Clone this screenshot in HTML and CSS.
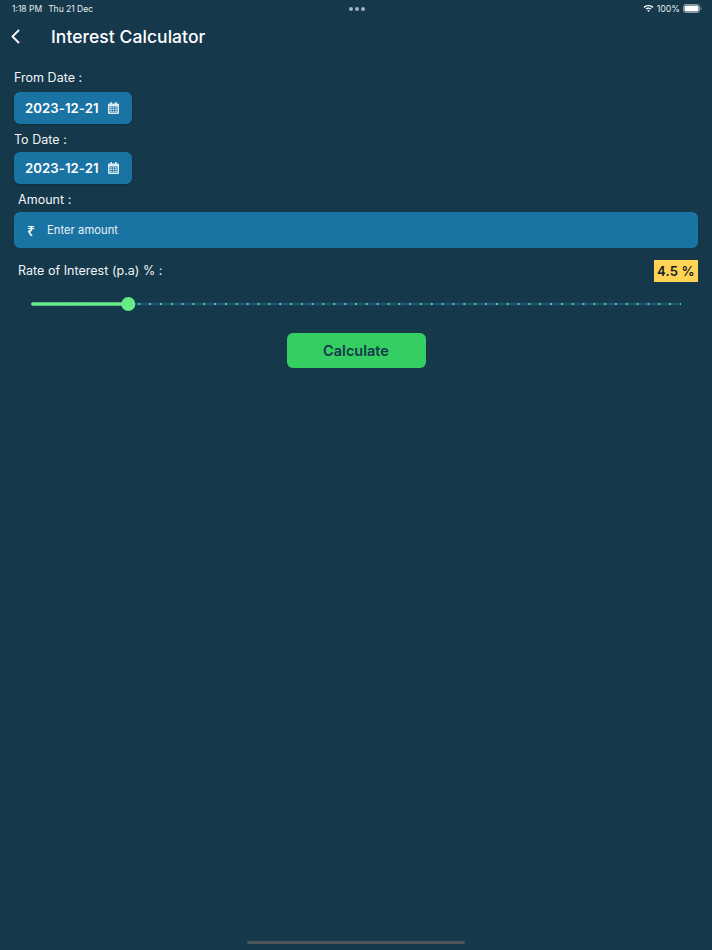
FILE: index.html
```html
<!DOCTYPE html>
<html lang="en">
<head>
<meta charset="utf-8">
<title>Interest Calculator</title>
<link rel="stylesheet" href="styles.css">
</head>
<body>
<div class="page">
  <div class="status">
    <div class="status-left"><span>1:18 PM</span><span>Thu 21 Dec</span></div>
    <div class="status-dots"><i></i><i></i><i></i></div>
    <div class="status-right">
      <svg class="wifi" width="11" height="9" viewBox="0 0 11 9"><path d="M5.5 1C3.6 1 1.9 1.700 .6 2.900l.9 1C2.600 2.900 4 2.300 5.500 2.300s2.900.6 4 1.600l.9-1C9.100 1.700 7.400 1 5.500 1z" fill="#fff"/><path d="M5.500 3.500c-1.100 0-2.100.4-2.900 1.100l.9 1c.5-.5 1.200-.8 2-.8s1.500.3 2 .8l.9-1c-.8-.7-1.800-1.100-2.900-1.100z" fill="#fff"/><path d="M5.500 5.900c-.5 0-1 .2-1.300.5l1.300 1.500 1.300-1.500c-.3-.3-.8-.5-1.300-.5z" fill="#fff"/></svg>
      <span>100%</span>
      <svg class="battery" width="19" height="9" viewBox="0 0 19 9"><rect x=".5" y=".5" width="16" height="8" rx="2" fill="none" stroke="#8b9aa5"/><rect x="1.500" y="1.500" width="14" height="6" rx="1" fill="#fff"/><path d="M17.500 3v3c.6-.2 1-.8 1-1.500s-.4-1.300-1-1.500z" fill="#8b9aa5"/></svg>
    </div>
  </div>
  <header class="appbar">
    <svg class="back" width="10" height="15" viewBox="0 0 10 15"><path d="M8 1 1.500 7.500 8 14" fill="none" stroke="#fff" stroke-width="1.800"/></svg>
    <h1>Interest Calculator</h1>
  </header>
  <main class="form">
    <label class="label">From Date :</label>
    <div class="date">
      <span>2023-12-21</span>
      <svg class="cal" width="11" height="12" viewBox="0 0 11 12"><path d="M1 1.500h1.500V0h1.500v1.500h3V0h1.500v1.500H10a1 1 0 0 1 1 1V11a1 1 0 0 1-1 1H1a1 1 0 0 1-1-1V2.500a1 1 0 0 1 1-1z" fill="#dcebf3"/><path d="M1.500 4.500h8v6h-8z" fill="#1a74a3"/><path d="M2.200 5.300h1.600v1.200H2.200zM4.700 5.300h1.600v1.200H4.700zM7.200 5.300h1.600v1.200H7.200zM2.200 7.100h1.600v1.200H2.200zM4.700 7.100h1.600v1.200H4.700zM7.200 7.100h1.600v1.200H7.200zM2.200 8.900h1.600v1.100H2.200zM4.700 8.900h1.600v1.100H4.700zM7.200 8.900h1.600v1.100H7.200z" fill="#dcebf3"/></svg>
    </div>
    <label class="label label-to">To Date :</label>
    <div class="date date-to">
      <span>2023-12-21</span>
      <svg class="cal" width="11" height="12" viewBox="0 0 11 12"><path d="M1 1.500h1.500V0h1.500v1.500h3V0h1.500v1.500H10a1 1 0 0 1 1 1V11a1 1 0 0 1-1 1H1a1 1 0 0 1-1-1V2.500a1 1 0 0 1 1-1z" fill="#dcebf3"/><path d="M1.500 4.500h8v6h-8z" fill="#1a74a3"/><path d="M2.200 5.300h1.600v1.200H2.200zM4.700 5.300h1.600v1.200H4.700zM7.200 5.300h1.600v1.200H7.200zM2.200 7.100h1.600v1.200H2.200zM4.700 7.100h1.600v1.200H4.700zM7.200 7.100h1.600v1.200H7.200zM2.200 8.900h1.600v1.100H2.200zM4.700 8.900h1.600v1.100H4.700zM7.200 8.900h1.600v1.100H7.200z" fill="#dcebf3"/></svg>
    </div>
    <label class="label label-amount">Amount :</label>
    <div class="amount">
      <span class="rupee">₹</span>
      <span class="placeholder">Enter amount</span>
    </div>
    <div class="rate-row">
      <span class="label rate-label">Rate of Interest (p.a) % :</span>
      <span class="badge">4.5 %</span>
    </div>
    <svg class="slider" width="650" height="14" viewBox="0 0 650 14">
      <line x1="1.250" y1="7" x2="648.750" y2="7" stroke="#1d5478" stroke-width="2.500" stroke-linecap="round"/>
      <line x1="9.830" y1="7" x2="650" y2="7" stroke="#45d486" stroke-width="2" stroke-dasharray="2 8.833"/>
      <line x1="1.750" y1="7" x2="97" y2="7" stroke="#65ec85" stroke-width="3.500" stroke-linecap="round"/>
      <line x1="9.830" y1="7" x2="92" y2="7" stroke="#8cd4a4" stroke-width="2" stroke-dasharray="2 8.833"/>
      <circle cx="97.300" cy="7" r="7" fill="#65ec85"/>
    </svg>
    <button class="calc">Calculate</button>
  </main>
  <div class="home"></div>
</div>
</body>
</html>
```
FILE: styles.css
```css
* { box-sizing: border-box; }
html, body { margin: 0; padding: 0; }
body { background: #15384b; font-family: Inter, "Noto Sans", sans-serif; color: #fff; }
.page { height: 950px; display: flex; flex-direction: column; overflow: hidden; }

.status { height: 17px; padding: 0 10px 0 12px; display: flex; align-items: center; justify-content: space-between; font-size: 8.500px; color: #e8edf0; }
.status-left { display: flex; gap: 6px; width: 120px; }
.status-dots { display: flex; gap: 2px; }
.status-dots i { width: 4px; height: 4px; border-radius: 50%; background: #9fb2bf; }
.status-right { display: flex; align-items: center; gap: 3px; width: 120px; justify-content: flex-end; font-size: 8.800px; }
.wifi, .battery { display: block; }
.wifi { margin-right: 0; }

.appbar { height: 38px; display: flex; align-items: center; padding-left: 11px; }
.back { display: block; }
.appbar h1 { margin: 0 0 0 30px; font-size: 17.500px; font-weight: 500; letter-spacing: .05px; color: #fff; }

.form { display: flex; flex-direction: column; padding: 0 14px; flex: 1; }
.label { display: block; font-size: 12.500px; line-height: 18px; letter-spacing: .03px; color: #f2f5f7; }
.form > .label:first-child { margin-top: 14px; }
.label-to { margin-top: 7px; }
.label-amount { margin-top: 7px; margin-left: 4px; }

.date { width: 117.500px; height: 32px; margin-top: 5px; padding: 0 12.500px 0 11px; background: #1a74a3; border-radius: 6px; display: flex; align-items: center; justify-content: space-between; font-size: 13.200px; font-weight: 600; letter-spacing: .05px; box-shadow: 0 1px 2px rgba(0,0,0,.15); }
.date-to { margin-top: 3px; }
.cal { display: block; }

.amount { height: 36px; margin-top: 3px; padding-left: 13px; background: #1a74a3; border-radius: 6px; display: flex; align-items: center; font-size: 11.200px; letter-spacing: .05px; }
.rupee { width: 20px; font-family: "Noto Sans", sans-serif; font-size: 14px; font-weight: 500; }
.placeholder { color: #eaf2f6; }

.rate-row { display: flex; align-items: center; justify-content: space-between; margin-top: 12px; height: 22px; }
.rate-label { margin-left: 4px; }
.badge { width: 44px; height: 22px; background: #ffd454; color: #111820; font-size: 13px; font-weight: 600; letter-spacing: .2px; display: flex; align-items: center; justify-content: center; }

.slider { display: block; margin: 15px 0 0 17px; }

.calc { align-self: center; width: 139px; height: 35px; margin-top: 22px; border: 0; border-radius: 6px; background: #35ce62; color: #15384b; font-family: inherit; font-size: 14.500px; font-weight: 600; letter-spacing: 0; padding: 0; }

.home { width: 218px; height: 3px; margin: 0 auto 6px; border-radius: 2px; background: #4d5658; }
```
